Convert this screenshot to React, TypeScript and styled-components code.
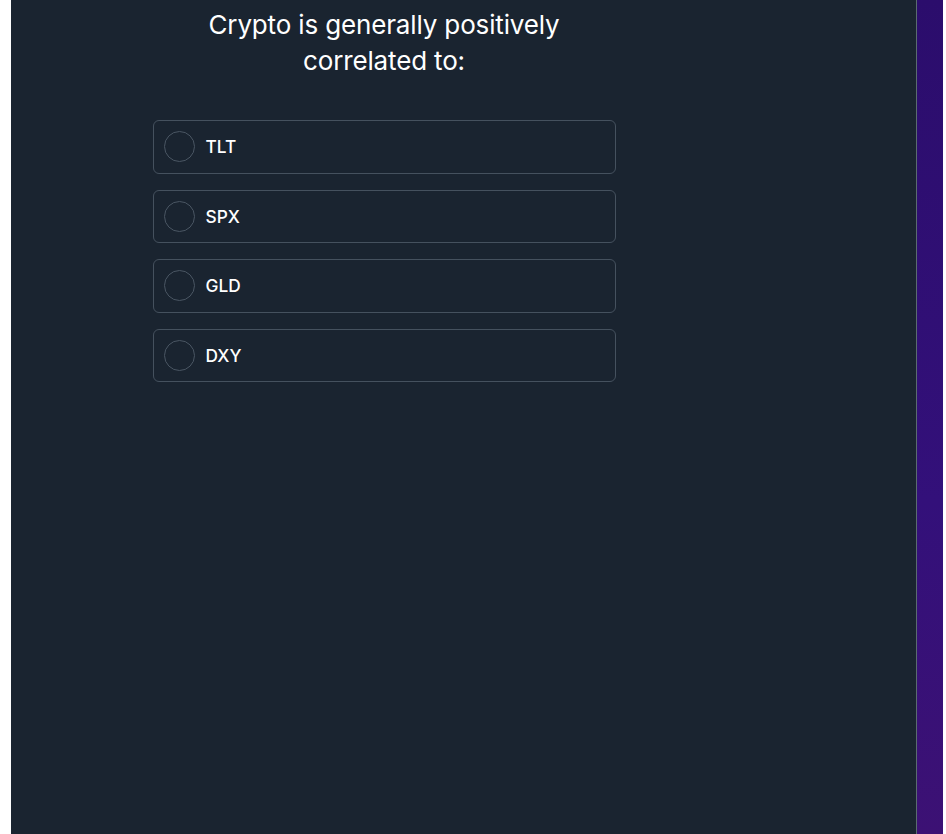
import React from "react";
import styled, { createGlobalStyle } from "styled-components";

const Global = createGlobalStyle`
  html, body { margin: 0; padding: 0; background: #ffffff; }
  body { font-family: Inter, "Noto Sans", sans-serif; }
  * { box-sizing: border-box; }
`;

const Frame = styled.div`
  display: flex;
  height: 834px;
  padding-left: 11px;
  padding-right: 3px;
  background: #ffffff;
  overflow: hidden;
`;

const Panel = styled.main`
  flex: 0 0 906px;
  background: #1a2430;
  border-right: 1px solid #5b6b70;
`;

const Side = styled.aside`
  flex: 1;
  background: linear-gradient(180deg, #2b0d6c 0%, #33107a 60%, #3c1174 100%);
`;

const Content = styled.div`
  width: 746px;
  display: flex;
  flex-direction: column;
  align-items: center;
  padding-top: 7px;
`;

const Title = styled.h1`
  margin: 0;
  width: 420px;
  text-align: center;
  color: #ffffff;
  font-size: 26px;
  letter-spacing: -0.15px;
  line-height: 36px;
  font-weight: 400;
`;

const Options = styled.div`
  margin-top: 41px;
  width: 463px;
  display: flex;
  flex-direction: column;
  gap: 16px;
`;

const Option = styled.label`
  display: flex;
  align-items: center;
  gap: 11px;
  height: 53.6px;
  padding: 0 10px;
  border: 1px solid #45515e;
  border-radius: 6px;
  color: #ffffff;
  font-size: 17.3px;
  font-weight: 500;
  cursor: pointer;
`;

const Radio = styled.span`
  width: 31px;
  height: 31px;
  border-radius: 50%;
  border: 1px solid #4a5663;
  flex: 0 0 auto;
`;

const items = ["TLT", "SPX", "GLD", "DXY"];

export default function App() {
  return (
    <>
      <Global />
      <Frame>
        <Panel>
          <Content>
            <Title>Crypto is generally positively correlated to:</Title>
            <Options>
              {items.map((t) => (
                <Option key={t}>
                  <Radio />
                  {t}
                </Option>
              ))}
            </Options>
          </Content>
        </Panel>
        <Side />
      </Frame>
    </>
  );
}
